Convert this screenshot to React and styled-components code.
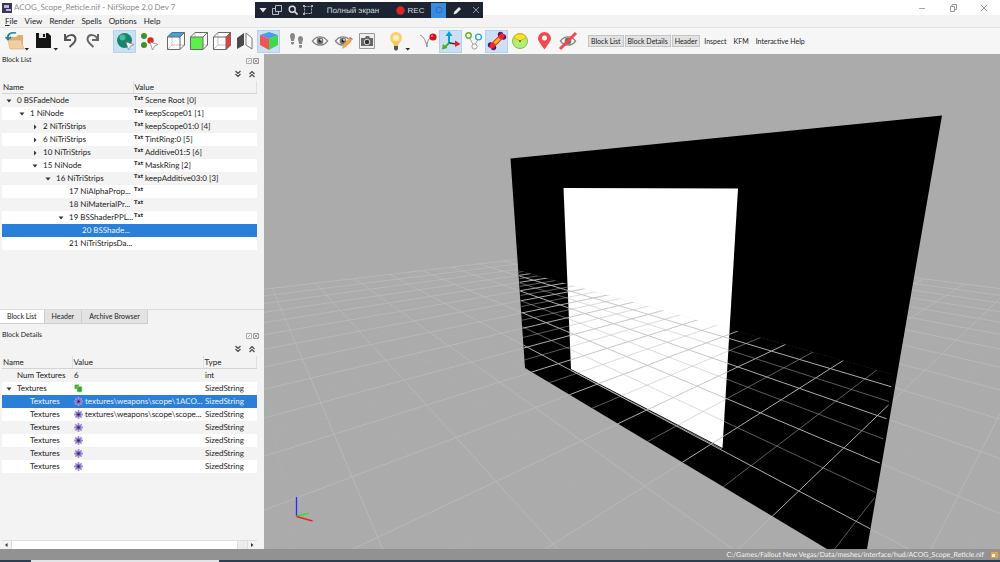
import React, { useState } from 'react'
import styled, { createGlobalStyle, css } from 'styled-components'

const GlobalStyle = createGlobalStyle`
  * {
    box-sizing: border-box;
  }
  body {
    margin: 0;
    overflow: hidden;
    font-family: Lato, 'Open Sans', sans-serif;
    font-size: 8px;
    line-height: 13px;
    color: #1b1b1b;
    background: #f3f3f3;
    text-rendering: geometricPrecision;
  }
  button {
    font: inherit;
    color: inherit;
    padding: 0;
    border: 0;
    background: none;
  }
  svg {
    display: block;
  }
`

const Root = styled.div`
  display: flex;
  flex-direction: column;
  height: 100vh;
`
const TopArea = styled.header`
  position: relative;
  flex: none;
`

// title bar
const TitleBar = styled.div`
  display: flex;
  align-items: center;
  height: 15px;
  padding: 0 11px 0 2px;
  background: white;
  color: #8c8c8c;
`
const Title = styled.h1`
  flex: 1;
  margin: 0 0 0 2px;
  font-size: 8px;
  font-weight: normal;
`
const WindowButtons = styled.div`
  display: flex;
  gap: 21px;
`
const WindowButton = styled.button`
  width: 10px;
  height: 10px;
`

// screen recorder strip that floats over the window
const Recorder = styled.div`
  position: absolute;
  top: 2px;
  left: 255px;
  display: flex;
  align-items: center;
  width: 228px;
  height: 16px;
  padding-left: 3px;
  background: #1c2431;
  color: #d5d9df;
  font-family: 'Liberation Sans', sans-serif;
`
const RecorderButton = styled.button`
  display: flex;
  align-items: center;
  justify-content: center;
  width: ${(props) => props.$width || 15}px;
  height: 15px;
  gap: 3px;
  background: ${(props) => (props.$active ? '#3a8bdf' : 'none')};
`
const RecorderMode = styled.span`
  flex: 1;
  text-align: center;
`

// menu and toolbar
const MenuBar = styled.nav`
  display: flex;
  gap: 7px;
  height: 13px;
  padding: 0 5px;
  border-bottom: 1px solid #e4e4e4;
`
const MenuItem = styled.button`
  line-height: 13px;
`
const Toolbar = styled.div`
  display: flex;
  align-items: center;
  height: 26px;
  padding: 0 3px;
  background: #f6f6f6;
`
const ToolButton = styled.button`
  display: flex;
  align-items: center;
  justify-content: center;
  flex: none;
  width: ${(props) => props.$width || 23}px;
  height: 23px;
  ${(props) =>
    props.$active &&
    css`
      background: #cbe0f5;
      border: 1px solid #b3d0ec;
    `}
`
const ToolGap = styled.span`
  flex: none;
  width: ${(props) => props.$width}px;
`
const TextButtons = styled.div`
  display: flex;
  flex: none;
  font-size: 7px;
`
const TextButton = styled.button`
  height: 12px;
  line-height: 10px;
  padding: 0 2px;
  margin-right: 1px;
  border: 1px solid ${(props) => (props.$active ? '#c4c4c4' : 'transparent')};
  background: ${(props) => (props.$active ? '#e2e2e2' : 'none')};
`

// docks
const Main = styled.div`
  display: flex;
  flex: 1;
  min-height: 0;
`
const Docks = styled.aside`
  display: flex;
  flex-direction: column;
  flex: 0 0 264px;
  min-height: 0;
`
const Dock = styled.section`
  display: flex;
  flex-direction: column;
  flex: ${(props) => props.$grow} 1 0;
  min-height: 0;
`
const DockTitle = styled.div`
  display: flex;
  align-items: center;
  justify-content: space-between;
  height: 13px;
  padding: 0 5px 0 2px;
`
const DockName = styled.h2`
  margin: 0;
  font-size: 7px;
  font-weight: normal;
`
const DockButtons = styled.div`
  display: flex;
  gap: 1px;
`
const DockButton = styled.button`
  width: 6px;
  height: 6px;
`
const ExpandRow = styled.div`
  display: flex;
  justify-content: flex-end;
  align-items: center;
  gap: 6px;
  height: 14px;
  padding: 0 8px;
`
const ExpandButton = styled.button`
  width: 8px;
  height: 8px;
`
const Tree = styled.table`
  width: 255px;
  margin-left: 2px;
  table-layout: fixed;
  border-collapse: collapse;
`
const HeadCell = styled.th`
  width: ${(props) => props.$width};
  height: 12px;
  padding: 1px 0 0 1px;
  line-height: 11px;
  font-weight: normal;
  text-align: left;
  border-bottom: 1px solid #d4d4d4;
  border-right: 1px solid #e0e0e0;
`
const Row = styled.tr`
  background: white;
  &:nth-child(odd) {
    background: #f3f3f3;
  }
  ${(props) =>
    props.$selected &&
    css`
      &&& {
        background: #2a80d9;
        color: #eaf2fb;
      }
    `}
`
const Cell = styled.td`
  height: 13px;
  padding: 0 0 0 2px;
  line-height: 13px;
`
const CellBody = styled.div`
  display: flex;
  align-items: center;
  height: 13px;
  padding-left: ${(props) => (props.$depth || 0) * 13}px;
`
const Arrow = styled.span`
  flex: none;
  width: 13px;
  padding-left: 2px;
`
const Label = styled.span`
  white-space: nowrap;
`
const Txt = styled.span`
  flex: none;
  width: 11px;
  margin-left: -1px;
  font-family: 'DejaVu Sans', sans-serif;
  font-size: 5px;
  font-weight: bold;
  line-height: 10px;
  align-self: flex-start;
`
const ValueIcon = styled.span`
  flex: none;
  width: 11px;
`
const Spacer = styled.div`
  flex: 1;
`
const Tabs = styled.div`
  display: flex;
  flex: none;
  height: 15px;
  margin-bottom: 5px;
  border-top: 1px solid #dcdcdc;
  font-size: 7px;
`
const Tab = styled.button`
  padding: 0 7px;
  border-right: 1px solid #cfcfcf;
  border-bottom: 1px solid #cfcfcf;
  background: ${(props) => (props.$active ? 'white' : '#e3e3e3')};
`
const ScrollBar = styled.div`
  display: flex;
  align-items: center;
  justify-content: space-between;
  flex: none;
  width: 255px;
  height: 9px;
  margin-left: 2px;
  border-top: 1px solid #dedede;
`
const ScrollTrack = styled.div`
  flex: 1;
  display: flex;
  justify-content: flex-end;
  height: 8px;
  background: white;
  border: 0 solid #dedede;
  border-width: 0 1px;
`
const ScrollRest = styled.div`
  width: 10px;
  background: #ededed;
  border-left: 1px solid #dedede;
`
const ScrollButton = styled.button`
  width: 9px;
  height: 8px;
`
const Viewport = styled.main`
  flex: 1;
  min-width: 0;
  background: #ababab;
`
const StatusBar = styled.footer`
  display: flex;
  align-items: center;
  justify-content: flex-end;
  flex: none;
  gap: 7px;
  height: 11px;
  padding-right: 2px;
  background: #929292;
  color: #f4f4f4;
  font-size: 7px;
  line-height: 11px;
`
const StatusPath = styled.span`
  padding-top: 2px;
`
const TaskBar = styled.div`
  flex: none;
  height: 2px;
  padding-left: 31px;
  background: #2b3e52;
`
const TaskProgress = styled.div`
  width: 188px;
  height: 2px;
  background: #e2e4e6;
`

const menus = ['View', 'Render', 'Spells', 'Options', 'Help']

const blocks = [
  { depth: 0, arrow: 'down', name: '0 BSFadeNode', value: 'Scene Root [0]' },
  { depth: 1, arrow: 'down', name: '1 NiNode', value: 'keepScope01 [1]' },
  { depth: 2, arrow: 'right', name: '2 NiTriStrips', value: 'keepScope01:0 [4]' },
  { depth: 2, arrow: 'right', name: '6 NiTriStrips', value: 'TintRing:0 [5]' },
  { depth: 2, arrow: 'right', name: '10 NiTriStrips', value: 'Additive01:5 [6]' },
  { depth: 2, arrow: 'down', name: '15 NiNode', value: 'MaskRing [2]' },
  { depth: 3, arrow: 'down', name: '16 NiTriStrips', value: 'keepAdditive03:0 [3]' },
  { depth: 4, name: '17 NiAlphaProp...', value: '' },
  { depth: 4, name: '18 NiMaterialPr...', value: '' },
  { depth: 4, arrow: 'down', name: '19 BSShaderPPL...', value: '' },
  { depth: 5, name: '20 BSShade...' },
  { depth: 4, name: '21 NiTriStripsDa...' },
]

const details = [
  { depth: 0, name: 'Num Textures', value: '6', type: 'int' },
  { depth: 0, arrow: 'down', name: 'Textures', icon: 'array', type: 'SizedString' },
  { depth: 1, name: 'Textures', icon: 'flower', value: 'textures\\weapons\\scope\\1ACO...', type: 'SizedString' },
  { depth: 1, name: 'Textures', icon: 'flower', value: 'textures\\weapons\\scope\\scope...', type: 'SizedString' },
  { depth: 1, name: 'Textures', icon: 'flower', type: 'SizedString' },
  { depth: 1, name: 'Textures', icon: 'flower', type: 'SizedString' },
  { depth: 1, name: 'Textures', icon: 'flower', type: 'SizedString' },
  { depth: 1, name: 'Textures', icon: 'flower', type: 'SizedString' },
]

function Icon({ size = 20, children }) {
  return (
    <svg width={size} height={size} viewBox={`0 0 ${size} ${size}`} fill="none">
      {children}
    </svg>
  )
}

function TreeArrow({ dir }) {
  return (
    <svg width="6" height="6" viewBox="0 0 6 6" fill="#333">
      {dir === 'down' ? <path d="M0.5 1.5h5L3 4.5z" /> : <path d="M2 0.5v5L4.5 3z" />}
    </svg>
  )
}

function Flower() {
  return (
    <svg width="9" height="9" viewBox="0 0 9 9">
      <path
        d="M4.5 0v9M0 4.5h9M1.3 1.3l6.4 6.4M7.7 1.3L1.3 7.7"
        stroke="#a592d8"
        strokeWidth="1.8"
      />
      <circle cx="4.5" cy="4.5" r="2.8" fill="#8a74c8" />
      <circle cx="4.5" cy="4.5" r="1.3" fill="#33275c" />
    </svg>
  )
}

function ArrayIcon() {
  return (
    <svg width="9" height="9" viewBox="0 0 9 9">
      <rect x="0.5" y="0.5" width="4.5" height="4.5" rx="1" fill="#43b52c" />
      <rect x="3" y="2.5" width="5" height="5.5" rx="1" fill="#3aa82a" stroke="#a5e08f" strokeWidth="0.6" />
    </svg>
  )
}

function Chevrons({ up }) {
  return (
    <svg width="8" height="8" viewBox="0 0 8 8" fill="none" stroke="#444" strokeWidth="1.1">
      {up ? <path d="M1.5 4L4 1.5 6.5 4M1.5 7L4 4.5 6.5 7" /> : <path d="M1.5 1L4 3.5 6.5 1M1.5 4L4 6.5 6.5 4" />}
    </svg>
  )
}

function Cube({ face, fill }) {
  return (
    <Icon>
      <path d="M1 6L6 1h13v13l-5 5H1z" fill="#fff" />
      <path d="M6 1v13h13M6 14l-5 5" stroke="#c4c4c4" />
      <path d={face} fill={fill} />
      <path d="M1.5 6h12.5v12.5H1.5zM1.5 6l4.5-4.5h12.5v12.5l-4.5 4.5M14 6l4.5-4.5" stroke="#6a6a6a" />
    </Icon>
  )
}

function Eye() {
  return (
    <>
      <path d="M2.5 10c4-5.5 11-5.5 15 0-4 5.5-11 5.5-15 0z" fill="#fff" stroke="#888" strokeWidth="1.4" />
      <circle cx="10" cy="10" r="3.4" fill="#777" />
      <circle cx="10" cy="10" r="1.4" fill="#222" />
      <circle cx="11" cy="8.8" r="0.9" fill="#fff" />
    </>
  )
}

function Pointer() {
  return <path d="M11 11l8 2.5-3.5 1.5-2 4z" fill="#fff" stroke="#888" strokeWidth="0.8" />
}

function DropArrow() {
  return <path d="M19.5 17h4.5l-2.2 2.6z" fill="#222" />
}

// Perspective of the ground plane: a square of 3 x 4 major cells onto its four
// corners in view coordinates.
const corners = [
  [688.5, 349.7],
  [877.5, 415.6],
  [641.8, 641.3],
  [456.1, 437.5],
]

function makeProjection([[x0, y0], [x1, y1], [x2, y2], [x3, y3]]) {
  const sx = x0 - x1 + x2 - x3
  const sy = y0 - y1 + y2 - y3
  const den = (x1 - x2) * (y3 - y2) - (x3 - x2) * (y1 - y2)
  const g = (sx * (y3 - y2) - (x3 - x2) * sy) / den
  const h = ((x1 - x2) * sy - sx * (y1 - y2)) / den
  return (a, b) => {
    const u = a / 3
    const v = (b - 1) / 4
    const w = g * u + h * v + 1
    return [
      (x0 + (x1 - x0 + g * x1) * u + (x3 - x0 + h * x3) * v) / w,
      (y0 + (y1 - y0 + g * y1) * u + (y3 - y0 + h * y3) * v) / w,
      w,
    ]
  }
}

const project = makeProjection(corners)
const A_MIN = -11
const A_MAX = 9
const B_MIN = -9
const B_MAX = 11

// walk along the line and stop where it gets behind the camera
function gridLine(from, to, point) {
  const parts = []
  for (let t = from; t <= to; t += 0.25) {
    const [x, y, w] = point(t)
    if (w < 0.08) break
    parts.push(`${x.toFixed(1)} ${y.toFixed(1)}`)
  }
  return parts.length > 1 ? `M${parts.join('L')}` : ''
}

function gridPath(minor) {
  const lines = []
  const start = minor ? 0.5 : 0
  for (let a = A_MIN + start; a <= A_MAX; a += 1) {
    lines.push(gridLine(B_MIN, B_MAX, (t) => project(a, t)))
  }
  for (let b = B_MIN + start; b <= B_MAX; b += 1) {
    lines.push(gridLine(A_MIN, A_MAX, (t) => project(t, b)))
  }
  return lines.join('')
}

const majorPath = gridPath(false)
const minorPath = gridPath(true)

function Scene() {
  return (
    <svg
      width="100%"
      height="100%"
      viewBox="264 54 736 495"
      preserveAspectRatio="xMidYMid slice"
      fill="none"
    >
      <defs>
        <clipPath id="front">
          <path d="M519 270.5L893 374.5 867 549H827L525 368z" />
        </clipPath>
      </defs>
      <path d={minorPath} stroke="#b2b2b2" strokeOpacity="0.3" />
      <path d={majorPath} stroke="#bababa" strokeOpacity="0.85" />
      <path d="M510.5 158.5L942 115.5 867 549H827L525 368z" fill="#000" />
      <path d="M563.5 188L738 188.5 722.5 448 571 369z" fill="#fff" />
      <path d="M571 370.5L722 449" stroke="#777" />
      <g clipPath="url(#front)">
        <path d={minorPath} stroke="#b8b8b8" strokeOpacity="0.5" />
        <path d={majorPath} stroke="#c0c0c0" strokeOpacity="0.9" />
      </g>
      <path d="M296.5 516V497" stroke="#2a2af0" strokeWidth="1.3" />
      <path d="M296.5 516l12-2.5" stroke="#2fe02f" strokeWidth="1.3" />
      <path d="M296.5 516.5l16 4.5" stroke="#f02020" strokeWidth="1.3" />
    </svg>
  )
}

function DockHeader({ name }) {
  return (
    <>
      <DockTitle>
        <DockName>{name}</DockName>
        <DockButtons>
          <DockButton aria-label={`Float ${name}`}>
            <Icon size={6}>
              <path d="M0.5 0.5h5v5h-5zM2 4l2-2" stroke="#aaa" />
            </Icon>
          </DockButton>
          <DockButton aria-label={`Close ${name}`}>
            <Icon size={6}>
              <path d="M0.5 0.5h5v5h-5zM1.5 1.5l3 3M4.5 1.5l-3 3" stroke="#999" />
            </Icon>
          </DockButton>
        </DockButtons>
      </DockTitle>
      <ExpandRow>
        <ExpandButton aria-label="Expand all">
          <Chevrons />
        </ExpandButton>
        <ExpandButton aria-label="Collapse all">
          <Chevrons up />
        </ExpandButton>
      </ExpandRow>
    </>
  )
}

function BlockTree() {
  const [selected, setSelected] = useState(10)
  return (
    <Tree aria-label="Block List">
      <thead>
        <tr>
          <HeadCell $width="131px">Name</HeadCell>
          <HeadCell>Value</HeadCell>
        </tr>
      </thead>
      <tbody>
        {blocks.map((block, i) => (
          <Row key={block.name} $selected={i === selected} onClick={() => setSelected(i)}>
            <Cell>
              <CellBody $depth={block.depth}>
                <Arrow>{block.arrow && <TreeArrow dir={block.arrow} />}</Arrow>
                <Label>{block.name}</Label>
              </CellBody>
            </Cell>
            <Cell>
              {block.value !== undefined && (
                <CellBody>
                  <Txt>Txt</Txt>
                  <Label>{block.value}</Label>
                </CellBody>
              )}
            </Cell>
          </Row>
        ))}
      </tbody>
    </Tree>
  )
}

function DetailsTree() {
  const [selected, setSelected] = useState(2)
  return (
    <Tree aria-label="Block Details">
      <thead>
        <tr>
          <HeadCell $width="70px">Name</HeadCell>
          <HeadCell $width="131px">Value</HeadCell>
          <HeadCell>Type</HeadCell>
        </tr>
      </thead>
      <tbody>
        {details.map((row, i) => (
          <Row key={i} $selected={i === selected} onClick={() => setSelected(i)}>
            <Cell>
              <CellBody $depth={row.depth}>
                <Arrow>{row.arrow && <TreeArrow dir={row.arrow} />}</Arrow>
                <Label>{row.name}</Label>
              </CellBody>
            </Cell>
            <Cell>
              <CellBody>
                {row.icon && <ValueIcon>{row.icon === 'array' ? <ArrayIcon /> : <Flower />}</ValueIcon>}
                <Label>{row.value}</Label>
              </CellBody>
            </Cell>
            <Cell>{row.type}</Cell>
          </Row>
        ))}
      </tbody>
    </Tree>
  )
}

function RecorderStrip() {
  return (
    <Recorder>
      <RecorderButton $width={10} aria-label="Recorder menu">
        <Icon size={8}>
          <path d="M0.5 2h7L4 6.5z" fill="#e4e7ea" />
        </Icon>
      </RecorderButton>
      <RecorderButton $width={18} aria-label="Windows">
        <Icon size={10}>
          <path d="M3.5 0.5h6v6h-6zM3.5 3.5h-3v6h6v-3" stroke="#b6bcc6" />
        </Icon>
      </RecorderButton>
      <RecorderButton $width={13} aria-label="Zoom">
        <Icon size={10}>
          <circle cx="4.2" cy="4.2" r="3" stroke="#dfe3e8" strokeWidth="1.4" />
          <path d="M6.5 6.5l3 3" stroke="#dfe3e8" strokeWidth="1.6" />
        </Icon>
      </RecorderButton>
      <RecorderButton $width={18} aria-label="Select area">
        <Icon size={10}>
          <path d="M1.5 1.5h7v7h-7z" stroke="#a9b0bb" strokeDasharray="2 1" />
          <path d="M0 0h2v2H0zM8 0h2v2H8zM0 8h2v2H0z" fill="#a9b0bb" />
        </Icon>
      </RecorderButton>
      <RecorderMode>Полный экран</RecorderMode>
      <RecorderButton $width={42}>
        <Icon size={9}>
          <circle cx="4.5" cy="4.5" r="4.2" fill="#d62828" />
        </Icon>
        REC
      </RecorderButton>
      <RecorderButton $active aria-label="Screenshot">
        <Icon size={8}>
          <circle cx="4" cy="4" r="3" stroke="#2c6fc0" />
        </Icon>
      </RecorderButton>
      <RecorderButton $width={22} aria-label="Draw">
        <Icon size={9}>
          <path d="M0.5 8.5l1-3 4.5-4.5 2 2-4.5 4.5z" fill="#e8eaee" />
        </Icon>
      </RecorderButton>
      <RecorderButton aria-label="Close recorder">
        <Icon size={8}>
          <path d="M1 1l6 6M7 1L1 7" stroke="#8c94a0" />
        </Icon>
      </RecorderButton>
    </Recorder>
  )
}

function Tools() {
  return (
    <Toolbar>
      <ToolButton $width={27} aria-label="Open">
        <svg width="26" height="20" viewBox="0 0 26 20" fill="none">
          <path d="M6 6h6l2-2h5v12H6z" fill="#dcae75" />
          <path d="M4 9h13l3 9H6z" fill="#f2cfa0" stroke="#dba96b" strokeWidth="0.6" />
          <path d="M12 2C7 1 3 3 4 8M1.5 6L4 8.5 7 6" stroke="#2a7f96" strokeWidth="1.7" />
          <path d="M20.5 17H25l-2.2 2.6z" fill="#222" />
        </svg>
      </ToolButton>
      <ToolGap $width={3} />
      <ToolButton $width={25} aria-label="Save">
        <svg width="24" height="20" viewBox="0 0 24 20">
          <path d="M2 2h12l3 3v12H2z" fill="#151515" />
          <path d="M5 2h7v5H5z" fill="#e8e8e8" />
          <path d="M9 3h2v3H9z" fill="#151515" />
          <DropArrow />
        </svg>
      </ToolButton>
      <ToolButton aria-label="Undo">
        <Icon>
          <path d="M5 3v6h6M5.5 8.5C7 3 15 2.5 15.5 8c0 3.5-3 5-6 8" stroke="#555" strokeWidth="2" />
        </Icon>
      </ToolButton>
      <ToolButton aria-label="Redo">
        <Icon>
          <path d="M15 3v6H9M14.5 8.5C13 3 5 2.5 4.5 8c0 3.5 3 5 6 8" stroke="#666" strokeWidth="2" />
        </Icon>
      </ToolButton>
      <ToolGap $width={9} />
      <ToolButton $active aria-label="Select objects">
        <Icon>
          <circle cx="9.5" cy="9.5" r="7.5" fill="#15866a" />
          <circle cx="7.5" cy="6.5" r="3" fill="#54b59a" />
          <Pointer />
        </Icon>
      </ToolButton>
      <ToolGap $width={1} />
      <ToolButton aria-label="Select vertices">
        <Icon>
          <circle cx="5" cy="5" r="3" fill="#3c9427" />
          <circle cx="5" cy="14" r="3" fill="#3c9427" />
          <circle cx="11.5" cy="9.5" r="3.2" fill="#dc2a1c" />
          <Pointer />
        </Icon>
      </ToolButton>
      <ToolGap $width={4} />
      <ToolButton aria-label="Top view">
        <Cube face="M1 6l5-5h13l-5 5z" fill="#35a5e8" />
      </ToolButton>
      <ToolButton aria-label="Front view">
        <Cube face="M1 6h13v13H1z" fill="#5cf04c" />
      </ToolButton>
      <ToolButton aria-label="Side view">
        <Cube face="M14 6l5-5v13l-5 5z" fill="#ee3b3b" />
      </ToolButton>
      <ToolButton $width={24} aria-label="Flip view">
        <Icon>
          <path d="M2 7l7-5v12l-7 4z" fill="#4a4a4a" />
          <path d="M11 2l6 5v11l-6-4z" fill="#fff" stroke="#777" />
        </Icon>
      </ToolButton>
      <ToolButton $active aria-label="Perspective">
        <Icon>
          <path d="M10 1l9 3-9 4-9-4z" fill="#4a9be8" />
          <path d="M1 4l9 4v11l-9-5z" fill="#f0555a" />
          <path d="M19 4l-9 4v11l9-5z" fill="#43d84a" />
        </Icon>
      </ToolButton>
      <ToolGap $width={5} />
      <ToolButton aria-label="Walk">
        <Icon>
          <path
            d="M3 5c0-4 5-4 5 0 0 2-1 3-1 5H4c0-2-1-3-1-5zM4 11h3v1c0 2-3 2-3 0zM11 8c0-4 5-4 5 0 0 2-1 3-1 5h-3c0-2-1-3-1-5zM12 14h3v1c0 3-3 3-3 0z"
            fill="#888"
          />
        </Icon>
      </ToolButton>
      <ToolButton aria-label="Load view">
        <Icon>
          <Eye />
        </Icon>
      </ToolButton>
      <ToolButton $width={24} aria-label="Save view">
        <Icon>
          <Eye />
          <path d="M9 18l1-4 6-7 3 2-6 7z" fill="#f0a848" />
          <path d="M16 7l1-1 3 2-1 1z" fill="#e06060" />
        </Icon>
      </ToolButton>
      <ToolButton aria-label="Screenshot">
        <Icon>
          <path d="M2.5 2.5h15v15h-15z" fill="#eee" stroke="#999" />
          <path d="M4 7h4l1-2h3l1 2h3v8H4z" fill="#666" />
          <circle cx="10" cy="11" r="2.8" fill="#333" stroke="#ddd" />
        </Icon>
      </ToolButton>
      <ToolGap $width={7} />
      <ToolButton $width={25} aria-label="Lighting">
        <svg width="24" height="20" viewBox="0 0 24 20">
          <circle cx="10" cy="7" r="6" fill="#fbcf6b" />
          <circle cx="10" cy="7" r="3" fill="#fff0bf" />
          <path d="M7 11h6l-1 4H8z" fill="#f6c25a" />
          <path d="M8 15h4v3l-1 1.5H9L8 18z" fill="#555" />
          <DropArrow />
        </svg>
      </ToolButton>
      <ToolGap $width={6} />
      <ToolButton aria-label="Draw pivot">
        <Icon>
          <path d="M2 4c4 2 6 6 7 12 0-6 2-9 5-10" stroke="#888" />
          <circle cx="15" cy="6" r="3.6" fill="#d3141d" />
          <circle cx="14" cy="5" r="1" fill="#f28a8a" />
        </Icon>
      </ToolButton>
      <ToolButton $active aria-label="Draw axes">
        <Icon>
          <path d="M8 12V4" stroke="#0ea0c8" strokeWidth="2" />
          <path d="M4.5 5L8 0l3.5 5z" fill="#0ea0c8" />
          <path d="M8 12l8 1" stroke="#333" strokeWidth="1.5" />
          <path d="M14 9.5l5.5 3.5-5.5 3z" fill="#e01e2e" />
          <path d="M8 12l-4 4" stroke="#4caf1f" strokeWidth="2" />
          <path d="M2 13l4.5 4L1 18.5z" fill="#4caf1f" />
        </Icon>
      </ToolButton>
      <ToolButton aria-label="Draw nodes">
        <Icon>
          <path d="M5 6l5 9 5-8" stroke="#aaa" />
          <circle cx="4.5" cy="4.5" r="2.7" fill="#fff" stroke="#5cae28" strokeWidth="1.4" />
          <circle cx="14.5" cy="6" r="2.9" fill="#fff" stroke="#30a8cf" strokeWidth="1.4" />
          <circle cx="10.5" cy="15.5" r="2.6" fill="#fff" stroke="#999" />
        </Icon>
      </ToolButton>
      <ToolButton $active aria-label="Draw collision">
        <Icon>
          <g fill="#5b1674">
            <circle cx="3.5" cy="14" r="2.7" />
            <circle cx="6.5" cy="16.5" r="2.7" />
            <circle cx="13.5" cy="3.5" r="2.7" />
            <circle cx="16.5" cy="6" r="2.7" />
          </g>
          <path d="M5 15L15 5" stroke="#f02a1d" strokeWidth="5" strokeLinecap="round" />
          <path d="M7.5 12.5l5-5" stroke="#f8b830" strokeWidth="3" />
        </Icon>
      </ToolButton>
      <ToolButton $width={24} aria-label="Draw constraints">
        <Icon>
          <circle cx="10" cy="10" r="7.5" fill="#b5ef72" stroke="#7fc23e" />
          <path d="M10 10L3.5 6.5a7.4 7.4 0 0 1 13 0z" fill="#fbe228" stroke="#e8a91a" />
          <circle cx="10" cy="10" r="1" fill="#555" />
        </Icon>
      </ToolButton>
      <ToolButton aria-label="Draw markers">
        <Icon>
          <path d="M10.5 18.5C6 12 4 10 4 7.5a6.5 6.5 0 0 1 13 0c0 2.5-2 4.5-6.5 11z" fill="#f04a4f" />
          <circle cx="10.5" cy="7" r="2.5" fill="#fff" />
        </Icon>
      </ToolButton>
      <ToolButton $width={25} aria-label="Show hidden">
        <Icon>
          <Eye />
          <path d="M2 18L18 2" stroke="#f0484c" strokeWidth="3" />
        </Icon>
      </ToolButton>
      <ToolGap $width={8} />
      <TextButtons>
        <TextButton $active>Block List</TextButton>
        <TextButton $active>Block Details</TextButton>
        <TextButton $active>Header</TextButton>
        <TextButton>Inspect</TextButton>
        <TextButton>KFM</TextButton>
        <TextButton>Interactive Help</TextButton>
      </TextButtons>
    </Toolbar>
  )
}

export default function App() {
  return (
    <Root>
      <GlobalStyle />
      <TopArea>
        <TitleBar>
          <Icon size={10}>
            <path d="M0 0h10v10H0z" fill="#3a3654" />
            <path d="M2 2h5v3H2zM4 6h5v2H4z" fill="#b9b4d8" />
          </Icon>
          <Title>ACOG_Scope_Reticle.nif - NifSkope 2.0 Dev 7</Title>
          <WindowButtons>
            <WindowButton aria-label="Minimize">
              <Icon size={10}>
                <path d="M2 5.5h6" stroke="#aaa" />
              </Icon>
            </WindowButton>
            <WindowButton aria-label="Restore">
              <Icon size={10}>
                <path d="M2.5 3.5h4v5h-4zM4 3V1.5h4.5v5H7" stroke="#999" />
              </Icon>
            </WindowButton>
            <WindowButton aria-label="Close">
              <Icon size={10}>
                <path d="M2 2l6 6M8 2L2 8" stroke="#999" />
              </Icon>
            </WindowButton>
          </WindowButtons>
        </TitleBar>
        <MenuBar>
          <MenuItem>
            <u>F</u>ile
          </MenuItem>
          {menus.map((menu) => (
            <MenuItem key={menu}>{menu}</MenuItem>
          ))}
        </MenuBar>
        <Tools />
        <RecorderStrip />
      </TopArea>
      <Main>
        <Docks>
          <Dock $grow={5}>
            <DockHeader name="Block List" />
            <BlockTree />
            <Spacer />
            <Tabs>
              <Tab $active>Block List</Tab>
              <Tab>Header</Tab>
              <Tab>Archive Browser</Tab>
            </Tabs>
          </Dock>
          <Dock $grow={4}>
            <DockHeader name="Block Details" />
            <DetailsTree />
            <Spacer />
            <ScrollBar>
              <ScrollButton aria-label="Scroll left">
                <Icon size={8}>
                  <path d="M5.5 2v4L3 4z" fill="#333" />
                </Icon>
              </ScrollButton>
              <ScrollTrack>
                <ScrollRest />
              </ScrollTrack>
              <ScrollButton aria-label="Scroll right">
                <Icon size={8}>
                  <path d="M3 2v4l2.5-2z" fill="#333" />
                </Icon>
              </ScrollButton>
            </ScrollBar>
          </Dock>
        </Docks>
        <Viewport>
          <Scene />
        </Viewport>
      </Main>
      <StatusBar>
        <StatusPath>C:/Games/Fallout New Vegas/Data/meshes/interface/hud/ACOG_Scope_Reticle.nif</StatusPath>
        <Icon size={7}>
          <path d="M0 1h7v6H0z" fill="#e8a04a" />
          <path d="M1 3h3v3H1z" fill="#fff0d8" />
        </Icon>
      </StatusBar>
      <TaskBar>
        <TaskProgress />
      </TaskBar>
    </Root>
  )
}
